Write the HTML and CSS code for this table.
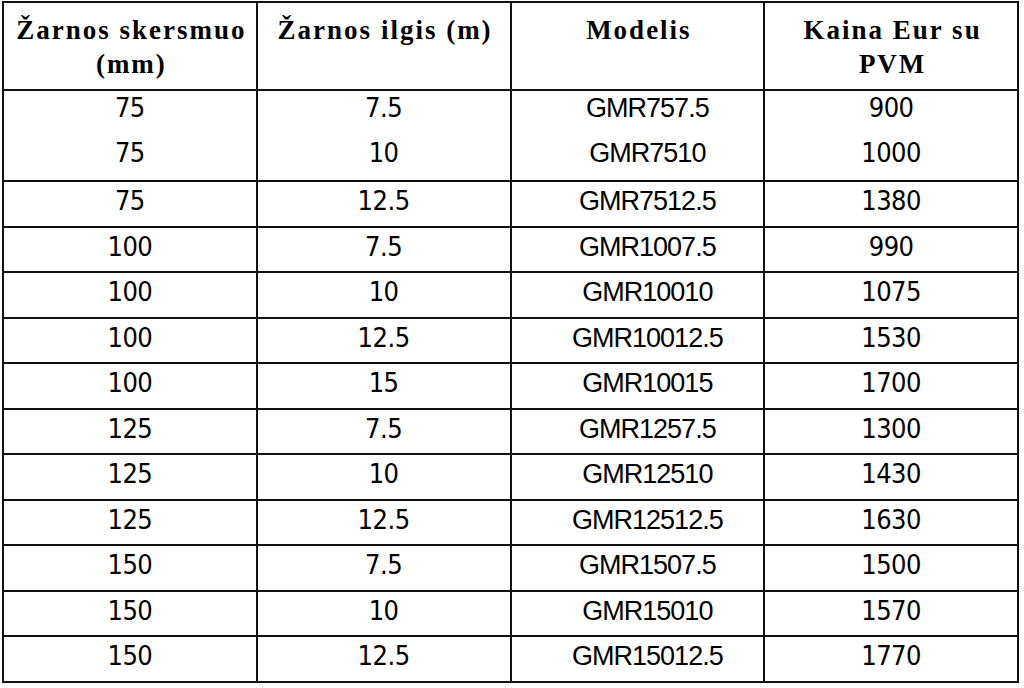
FILE: index.html
```html
<!DOCTYPE html>
<html lang="lt">
<head>
<meta charset="utf-8">
<title>Žarnos kainos</title>
<link rel="stylesheet" href="styles.css">
</head>
<body>
<table class="price-table">
  <thead>
    <tr class="head-row">
      <th>Žarnos skersmuo<br>(mm)</th>
      <th>Žarnos ilgis (m)</th>
      <th class="model-head">Modelis</th>
      <th>Kaina Eur su<br>PVM</th>
    </tr>
  </thead>
  <tbody>
    <tr class="row row-open-bottom"><td>75</td><td>7.5</td><td class="model">GMR757.5</td><td>900</td></tr>
    <tr class="row row-open-top"><td>75</td><td>10</td><td class="model">GMR7510</td><td>1000</td></tr>
    <tr class="row"><td>75</td><td>12.5</td><td class="model">GMR7512.5</td><td>1380</td></tr>
    <tr class="row"><td>100</td><td>7.5</td><td class="model">GMR1007.5</td><td>990</td></tr>
    <tr class="row"><td>100</td><td>10</td><td class="model">GMR10010</td><td>1075</td></tr>
    <tr class="row"><td>100</td><td>12.5</td><td class="model">GMR10012.5</td><td>1530</td></tr>
    <tr class="row"><td>100</td><td>15</td><td class="model">GMR10015</td><td>1700</td></tr>
    <tr class="row"><td>125</td><td>7.5</td><td class="model">GMR1257.5</td><td>1300</td></tr>
    <tr class="row"><td>125</td><td>10</td><td class="model">GMR12510</td><td>1430</td></tr>
    <tr class="row"><td>125</td><td>12.5</td><td class="model">GMR12512.5</td><td>1630</td></tr>
    <tr class="row"><td>150</td><td>7.5</td><td class="model">GMR1507.5</td><td>1500</td></tr>
    <tr class="row"><td>150</td><td>10</td><td class="model">GMR15010</td><td>1570</td></tr>
    <tr class="row"><td>150</td><td>12.5</td><td class="model">GMR15012.5</td><td>1770</td></tr>
  </tbody>
</table>
</body>
</html>
```
FILE: styles.css
```css
html, body {
  margin: 0;
  padding: 0;
  background: #ffffff;
}

body {
  padding: 1px 0 0 2px;
}

.price-table {
  width: 1017px;
  table-layout: fixed;
  border-collapse: collapse;
  border: 2px solid #000;
  color: #000;
}

.price-table th,
.price-table td {
  border: 2px solid #111;
  text-align: center;
  padding: 0;
}

.price-table th {
  font-family: "Liberation Serif", "Times New Roman", serif;
  font-weight: bold;
  font-size: 27px;
  line-height: 34px;
  letter-spacing: 2px;
  vertical-align: top;
  padding-top: 10px;
  padding-left: 3px;
}

.head-row {
  height: 88px;
}

.row {
  height: 45.5px;
}

.price-table td {
  font-family: "DejaVu Sans Condensed", "DejaVu Sans", sans-serif;
  font-stretch: semi-condensed;
  font-size: 27px;
  letter-spacing: -0.5px;
  vertical-align: middle;
  padding-bottom: 5px;
  line-height: 30px;
}

.price-table td.model {
  font-family: "Liberation Sans", Arial, sans-serif;
  font-stretch: normal;
  font-size: 27px;
  letter-spacing: -1px;
  padding-left: 20px;
}

.row-open-bottom td {
  border-bottom-style: hidden;
  padding-bottom: 10px;
}

.row-open-top td {
  border-top-style: hidden;
  padding-bottom: 10px;
}
```
